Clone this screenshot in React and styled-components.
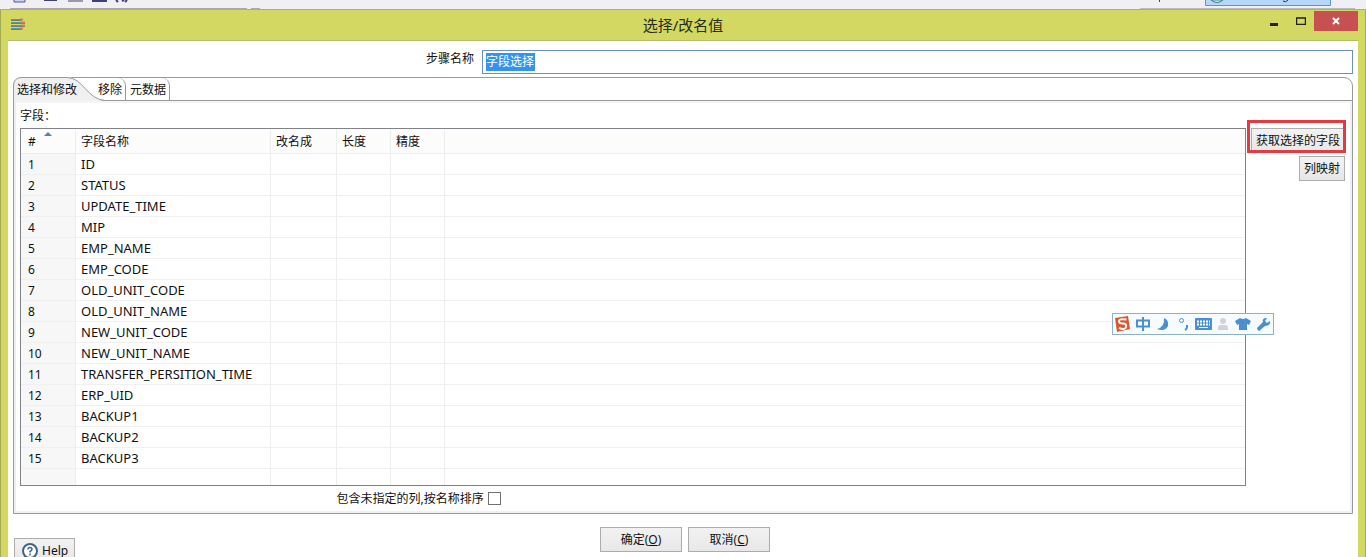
import React from "react";
import styled, { createGlobalStyle } from "styled-components";

const Global = createGlobalStyle`
  * { box-sizing: border-box; }
  html, body { margin: 0; padding: 0; background: #fff; }
  body, button, input {
    font-family: "Noto Sans", "Noto Sans CJK SC", sans-serif;
    font-size: 12px;
    line-height: 18px;
    color: #111;
  }
`;

const Screen = styled.div`
  display: flex;
  flex-direction: column;
  height: 100vh;
  overflow: hidden;
`;

const HostBar = styled.div`
  display: flex;
  justify-content: space-between;
  flex: none;
  height: 10px;
  background: #f0eff4;
  border-bottom: 1px solid #a9a9a0;

  svg { display: block; }
`;

const Dialog = styled.main`
  position: relative;
  display: flex;
  flex-direction: column;
  flex: 1;
  min-height: 0;
  padding: 0 7px;
  background: #d2d862;
  border: solid #a3a94e;
  border-width: 0 1px;
`;

const TitleBar = styled.header`
  display: grid;
  grid-template-columns: 1fr auto 1fr;
  flex: none;
  height: 30px;
`;

const AppIcon = styled.svg`
  margin: 8px 0 0 3px;
`;

const Title = styled.h1`
  margin: 0;
  font-size: 15px;
  font-weight: 400;
  line-height: 30px;
  color: #2b2b14;
`;

const WindowButtons = styled.div`
  display: flex;
  justify-content: flex-end;
  align-items: flex-start;
`;

const WindowButton = styled.button`
  display: flex;
  align-items: center;
  justify-content: center;
  width: ${(p) => (p.$close ? 44 : 27)}px;
  height: 20px;
  margin-top: 1px;
  padding: 0;
  border: 0;
  background: ${(p) => (p.$close ? "#c75050" : "transparent")};
`;

const Client = styled.div`
  flex: 1;
  min-height: 0;
  padding: 9px 5px 0;
  background: #fff;
  border: 1px solid #b4ba70;
  border-width: 1px 0 0;
`;

const StepRow = styled.div`
  display: grid;
  grid-template-columns: 35% 1fr;
`;

const StepLabel = styled.label`
  padding-right: 8px;
  text-align: right;
`;

const StepInput = styled.div`
  display: flex;
  height: 24px;
  padding: 2px 3px;
  border: 1px solid #6a8fc4;
  background: #fff;

  input {
    width: 100%;
    height: 18px;
    padding: 0;
    border: 0;
    outline: 0;
    background: linear-gradient(#3393f0, #3393f0) 0 0 / 49px 100% no-repeat;
    color: #fff;
  }
`;

const TabFolder = styled.section`
  margin-top: 3px;
  border: 1px solid #999;
  border-radius: 9px 9px 0 0;
`;

const TabStrip = styled.div`
  display: flex;
  height: 23px;
  border-bottom: 1px solid #999;
`;

const SelectedTab = styled.button`
  position: relative;
  width: 80px;
  height: 23px;
  padding: 0 0 0 3px;
  border: 0;
  background: none;
  text-align: left;

  svg {
    position: absolute;
    left: -1px;
    top: -1px;
  }
  span { position: relative; }
`;

const Tab = styled.button`
  height: 22px;
  padding: 2px 3px 0 4px;
  border: 0;
  border-right: 1px solid #999;
  border-radius: 0 8px 0 0;
  background: none;
`;

const TabPage = styled.div`
  padding: 4px 5px 0 4px;
  border: 2px solid #f0f0f0;
  border-top-color: #f5f5f5;
`;

const FieldArea = styled.div`
  display: flex;
  align-items: flex-start;
  gap: 5px;
`;

const FieldTitle = styled.div`
  height: 21px;
`;

const TableFrame = styled.div`
  flex: 1;
  height: 358px;
  overflow: hidden;
  border: 1px solid #7f8287;
`;

const FieldTable = styled.table`
  width: 100%;
  table-layout: fixed;
  border-collapse: separate;
  border-spacing: 0;
`;

const Col = styled.col`
  width: ${(p) => (p.$w ? `${p.$w}px` : "auto")};
`;

const HeadCell = styled.th`
  position: relative;
  height: 25px;
  padding: 2px 5px 0;
  text-align: left;
  font-weight: 400;
  background: #fcfcfc;
  border-right: ${(p) => (p.$last ? "0" : "1px solid #ededed")};
  border-bottom: 1px solid #ededed;

  &:first-child { padding-left: 7px; }

  svg {
    position: absolute;
    left: 23px;
    top: 2px;
  }
`;

const Cell = styled.td`
  height: 21px;
  padding: ${(p) => (p.$name ? 0 : 2)}px 5px 0;
  font-size: ${(p) => (p.$name ? 13 : 12)}px;
  border-right: ${(p) => (p.$last ? "0" : "1px solid #ededed")};
  border-bottom: 1px solid #f0f0f0;

  &:first-child {
    padding-left: 7px;
    background: #f7f7f7;
  }
`;

const SideButtons = styled.div`
  display: flex;
  flex-direction: column;
  align-items: flex-end;
  gap: 3px;
`;

const PushButton = styled.button`
  height: 25px;
  padding: 0 4px;
  border: 1px solid #acacac;
  background: linear-gradient(#f2f2f2, #e7e7e7);
  white-space: nowrap;
`;

const Highlighted = styled.div`
  position: relative;

  &::after {
    content: "";
    position: absolute;
    inset: -8px -1px 0 -4px;
    border: 3px solid #e53a40;
    pointer-events: none;
  }
`;

const OptionRow = styled.div`
  display: grid;
  grid-template-columns: 35% 1fr;
  align-items: center;
  height: 25px;

  label { text-align: right; }
  input {
    appearance: none;
    width: 13px;
    height: 13px;
    margin: 0 0 0 4px;
    border: 1px solid #707070;
    background: #fff;
  }
`;

const Footer = styled.footer`
  display: grid;
  grid-template-columns: 1fr auto 1fr;
  align-items: start;
  margin-right: -3px;
  padding: 13px 0 0 1px;
`;

const FooterButtons = styled.div`
  display: flex;
  gap: 6px;

  button { width: 82px; }
`;

const HelpButton = styled.button`
  display: flex;
  align-items: center;
  justify-self: start;
  gap: 4px;
  height: 25px;
  margin-top: 11px;
  padding: 0 6px 0 7px;
  border: 1px solid #acacac;
  background: linear-gradient(#f2f2f2, #e7e7e7);
`;

const ImeBar = styled.div`
  position: absolute;
  right: 91px;
  top: 303px;
  width: 162px;
  height: 22px;
  border: 1px solid #8fb1c4;
  background: #f5fbff;

  svg { display: block; }
`;

const columns = ["#", "字段名称", "改名成", "长度", "精度"];
const fields = [
  "ID", "STATUS", "UPDATE_TIME", "MIP", "EMP_NAME", "EMP_CODE",
  "OLD_UNIT_CODE", "OLD_UNIT_NAME", "NEW_UNIT_CODE", "NEW_UNIT_NAME",
  "TRANSFER_PERSITION_TIME", "ERP_UID", "BACKUP1", "BACKUP2", "BACKUP3", "",
];

function HostToolbar() {
  return (
    <HostBar>
      <svg width="260" height="9" viewBox="0 0 260 9">
        <path d="M14 0v2h11V0" fill="#c9d4ee" stroke="#55589a" />
        <path d="M44 0h13v1H44zM92 0h15v2H92z" fill="#3d4274" />
        <path d="M68 0h15v2H68z" fill="#9a9aae" />
        <path d="M116 0l2 2M122 1l2-1M127 0l-2 2" stroke="#3d4274" strokeWidth="2" />
        <path d="M10 8.500h237M251 8.500h9" stroke="#aaa" />
      </svg>
      <svg width="226" height="9" viewBox="0 0 226 9">
        <path d="M19.500 0v2" stroke="#444" />
        <path d="M65.500 -1h125v6.500h-125z" fill="#b5d6f8" stroke="#5d94cf" />
        <path d="M71 0q6 5 12 0z" fill="#d9f2e8" stroke="#3d7c8c" />
        <path d="M143 1q3 2 5-1" fill="none" stroke="#333" />
        <path d="M0 8.500h215" stroke="#bbb" />
      </svg>
    </HostBar>
  );
}

function ImeToolbar() {
  return (
    <ImeBar>
      <svg width="160" height="20" viewBox="0 0 160 20" role="img" aria-label="输入法">
        <path d="M2 4l13-2 2 13-13 3z" fill="#d9582f" />
        <path d="M13.500 5.500q-7.500-1-7.500 1.500t4 2.500 3 3.500-7 1" fill="none" stroke="#fff" strokeWidth="2" />
        <path d="M24 6.500h12v6H24zM30 3v14" fill="none" stroke="#4a8fcf" strokeWidth="2" />
        <path d="M51 4q5 2 4 8-3 6-11 3 8-2 7-11z" fill="#4a8fcf" />
        <circle cx="68.500" cy="6.500" r="2" fill="none" stroke="#4a8fcf" />
        <path d="M74 11v2q0 2-2 3" fill="none" stroke="#4a8fcf" strokeWidth="2" />
        <rect x="82" y="4" width="17" height="12" rx="1" fill="#4a8fcf" />
        <path d="M84 7.500h13M84 10.500h13" stroke="#fff" strokeWidth="2" strokeDasharray="2 1" />
        <path d="M86 13.500h9" stroke="#fff" />
        <circle cx="110" cy="7" r="3" fill="#cfd2d6" />
        <path d="M105 16v-2q0-3 3-3h4q3 0 3 3v2z" fill="#cfd2d6" />
        <path d="M127 4q3 2 6 0l5 3-2 4-2-1v6h-8v-6l-2 1-2-4z" fill="#4a8fcf" />
        <path d="M144 14l6-6q-1-3 2-4l2 0-2 3 2 2 3-2q1 4-4 5l-1 0-6 5q-2-1-2-3z" fill="#4a8fcf" />
      </svg>
    </ImeBar>
  );
}

export default function App() {
  return (
    <Screen>
      <Global />
      <HostToolbar />
      <Dialog>
        <TitleBar>
          <AppIcon width="16" height="14" viewBox="0 0 16 14">
            <path d="M0 1.500h10M0 4.500h10M0 7.500h10M0 10.500h10" stroke="#5f9a90" strokeWidth="1" />
            <path d="M0 2.500h11M0 5.500h14M0 8.500h14M0 11.500h11" stroke="#73787a" />
            <path d="M9 1.500h3M10 4.500h4M10 7.500h4M9 10.500h3" stroke="#c9805c" strokeWidth="2" />
          </AppIcon>
          <Title>选择/改名值</Title>
          <WindowButtons>
            <WindowButton aria-label="最小化">
              <svg width="8" height="12"><path d="M0 8h8v3H0z" fill="#222" /></svg>
            </WindowButton>
            <WindowButton aria-label="最大化">
              <svg width="10" height="8"><path d="M.5 1v6.500h9V1M0 1h10" fill="none" stroke="#222" strokeWidth="1.500" /></svg>
            </WindowButton>
            <WindowButton $close aria-label="关闭">
              <svg width="8" height="8"><path d="M1 1l6 6M7 1L1 7" stroke="#fff" strokeWidth="2" /></svg>
            </WindowButton>
          </WindowButtons>
        </TitleBar>
        <Client>
          <StepRow>
            <StepLabel htmlFor="step">步骤名称</StepLabel>
            <StepInput><input id="step" defaultValue="字段选择" /></StepInput>
          </StepRow>
          <TabFolder>
            <TabStrip role="tablist">
              <SelectedTab role="tab" aria-selected="true">
                <svg width="96" height="24" viewBox="0 0 96 24">
                  <path d="M0 24V9Q0 0 9 0H54C70 0 74 23 92 24z" fill="#f0f0f0" />
                  <path d="M.5 24V9Q.5 .5 9 .5H54C70 .5 74 22.500 92 23.500" fill="none" stroke="#999" />
                </svg>
                <span>选择和修改</span>
              </SelectedTab>
              <Tab role="tab">移除</Tab>
              <Tab role="tab">元数据</Tab>
            </TabStrip>
            <TabPage>
              <FieldTitle>字段：</FieldTitle>
              <FieldArea>
                <TableFrame>
                  <FieldTable>
                    <colgroup>
                      <Col $w={55} /><Col $w={195} /><Col $w={66} /><Col $w={54} /><Col $w={54} /><Col />
                    </colgroup>
                    <thead>
                      <tr>
                        {columns.map((c, i) => (
                          <HeadCell key={c}>
                            {c}
                            {i === 0 && (
                              <svg width="8" height="5"><path d="M0 5L4 1l4 4z" fill="#4d86ad" /></svg>
                            )}
                          </HeadCell>
                        ))}
                        <HeadCell $last />
                      </tr>
                    </thead>
                    <tbody>
                      {fields.map((f, i) => (
                        <tr key={i}>
                          <Cell>{f && i + 1}</Cell>
                          <Cell $name>{f}</Cell>
                          <Cell /><Cell /><Cell /><Cell $last />
                        </tr>
                      ))}
                    </tbody>
                  </FieldTable>
                </TableFrame>
                <SideButtons>
                  <Highlighted><PushButton>获取选择的字段</PushButton></Highlighted>
                  <PushButton>列映射</PushButton>
                </SideButtons>
              </FieldArea>
              <OptionRow>
                <label htmlFor="sort">包含未指定的列,按名称排序</label>
                <input id="sort" type="checkbox" />
              </OptionRow>
            </TabPage>
          </TabFolder>
          <Footer>
            <HelpButton>
              <svg width="16" height="16" viewBox="0 0 16 16">
                <circle cx="8" cy="8" r="7" fill="#fff" stroke="#3f6486" strokeWidth="2" />
                <path d="M6 6.500q0-2 2-2t2 1.800q0 1-2 2.200v1M8 10.500v2" fill="none" stroke="#3f6486" strokeWidth="1.500" />
              </svg>
              Help
            </HelpButton>
            <FooterButtons>
              <PushButton>确定(<u>O</u>)</PushButton>
              <PushButton>取消(<u>C</u>)</PushButton>
            </FooterButtons>
          </Footer>
        </Client>
        <ImeToolbar />
      </Dialog>
    </Screen>
  );
}
